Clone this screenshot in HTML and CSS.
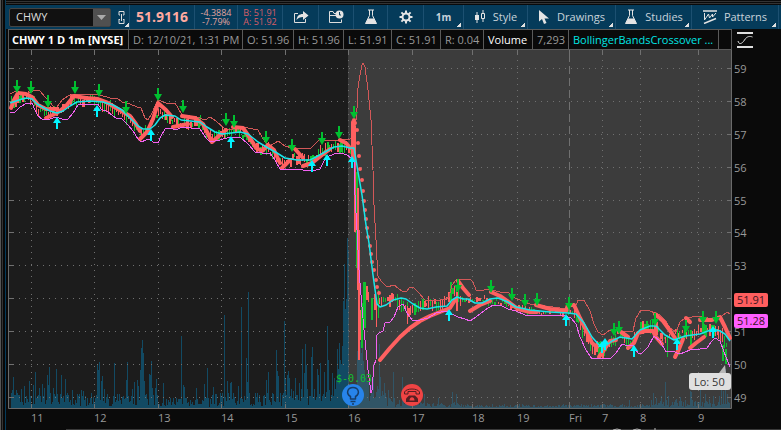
FILE: index.html
```html
<!DOCTYPE html>
<html lang="en">
<head>
<meta charset="utf-8">
<title>CHWY 1 D 1m</title>
<link rel="stylesheet" href="styles.css">
</head>
<body>
<div class="window">
  <div class="gutter"></div>
  <main class="panel">
    <div class="toolbar">
      <div class="tool symbol">
        <div class="picker">
          <select class="picker-select" aria-label="Symbol"><option>CHWY</option></select>
          <svg class="picker-arrow" viewBox="0 0 17 17"><path d="M4 6h9l-4.500 5z" fill="#aaa"/></svg>
        </div>
        <button class="link-button menu" aria-label="Link">
          <svg width="9" height="15" viewBox="0 0 9 15" fill="none" stroke="#ddd"><path d="M2 5V1.500h5V5M2 9v4.500h5V9M4.500 4v7M2 5h1M6 5h1M2 9.500h1M6 9.500h1"/></svg>
        </button>
      </div>
      <div class="tool last">51.9116</div>
      <div class="tool pair change"><span>-4.3884</span><span>-7.79%</span></div>
      <div class="tool pair quote"><span>B: 51.91</span><span>A: 51.92</span></div>
      <button class="tool" aria-label="Share"><svg width="16" height="14" viewBox="0 0 16 14"><path d="M5 3.500H1.500v9h11V9" fill="none" stroke="#ddd"/><path d="M3.500 10C4 6 6 4 10 4V1l5.500 4.500L10 10V7C7 7 5 8 3.500 10z" fill="#e4e4e4"/></svg></button>
      <button class="tool" aria-label="Calendar"><svg width="16" height="14" viewBox="0 0 16 14"><path d="M8 3.500H6L5 1.500H1.500v11h12V9.500M1.500 5.500H8" fill="none" stroke="#ddd"/><circle cx="11.500" cy="4.500" r="4" fill="#e4e4e4"/><path d="M11.500 2v3h1.500" fill="none" stroke="#053b5a"/></svg></button>
      <button class="tool" aria-label="Flask"><svg width="14" height="16" viewBox="0 0 14 16"><path d="M4 1h6M5.500 1v5.500L1.500 14.500h11L8.500 6.500V1" fill="none" stroke="#e4e4e4"/><path d="M4 9.500h6l2.500 5h-11z" fill="#e4e4e4"/></svg></button>
      <button class="tool" aria-label="Settings"><svg width="14" height="14" viewBox="-7 -7 14 14" fill="none" stroke="#e4e4e4"><circle r="3.500" stroke-width="2"/><path stroke-width="2" d="M0-6.500v3M0 3.500v3M-6.500 0h3M3.500 0h3M-4.600-4.600l2 2M2.600 2.600l2 2M-4.600 4.600l2-2M2.600-2.600l2-2"/></svg></button>
      <button class="tool menu period">1m</button>
      <button class="tool menu"><svg width="12" height="14" viewBox="0 0 12 14"><path d="M3 2v11M9 0v12" stroke="#e4e4e4"/><path d="M1 5h4v5H1z" fill="#e4e4e4"/><path d="M7.500 3.500h3v5h-3z" fill="#053b5a" stroke="#e4e4e4"/></svg>Style</button>
      <button class="tool menu"><svg width="12" height="14" viewBox="0 0 12 14"><path d="M1 0v11.500l3-2.500 2 5 2.500-1-2-4.500H11z" fill="#e4e4e4"/></svg>Drawings</button>
      <button class="tool menu"><svg width="14" height="16" viewBox="0 0 14 16"><path d="M4 1h6M5.500 1v5.500L1.500 14.500h11L8.500 6.500V1" fill="none" stroke="#e4e4e4"/><path d="M4 9.500h6l2.500 5h-11z" fill="#e4e4e4"/></svg>Studies</button>
      <button class="tool menu"><svg width="14" height="14" viewBox="0 0 14 14" fill="none" stroke="#e4e4e4"><path d="M0 1h14M1 13.500l12-5" stroke-width="1.500"/><path d="M1.500 3v7l4-6 1 4 3-4v3L13 3"/></svg>Patterns</button>
    </div>
    <div class="info">
      <span class="cell title">CHWY 1 D 1m [NYSE]</span>
      <span class="cell">D: 12/10/21, 1:31 PM</span>
      <span class="cell">O: 51.96</span>
      <span class="cell">H: 51.96</span>
      <span class="cell">L: 51.91</span>
      <span class="cell">C: 51.91</span>
      <span class="cell">R: 0.04</span>
      <span class="cell bright">Volume</span>
      <span class="cell">7,293</span>
      <span class="cell study">BollingerBandsCrossover ...</span>
      <span class="cell"></span>
      <button class="scale" aria-label="Axis scale"><svg width="16" height="16" viewBox="0 0 16 16" fill="none" stroke="#e0e0e0"><path d="M0 1h16M0 15h16" stroke-width="2"/><path d="M1 9c1 4 4 3 6.500-1S13 4 15.500 5"/></svg></button>
    </div>
    <svg class="chart" id="chart" viewBox="8 50 773 380" role="img" aria-label="Price chart">
      <path d="M8 50h340v359H8z" fill="#1c1c1c"/>
      <path d="M348 50h383v359H348z" fill="#3c3c3c"/>
      <g id="volume"></g>
      <g id="grid" stroke="#707070"></g>
      <path class="frame" d="M8.500 50V408.500H731.500V50"/>
      <g id="candles"></g>
      <path class="upper" d="M10 94L16 91 22 93 28 93 33 91 36 90 40 91 45 97 50 102 55 109 57 107 62 100 68 96 74 94 100 95 110 98 117 98 122 102 130 104 137 107 141 108 145 118 148 120 152 113 158 100 166 103 175 103 178 108 182 115 197 117 205 120 210 117 216 121 224 128 230 130 238 127 248 128 258 130 265 142 270 146 278 141 285 146 292 148 310 149 314 145 320 139 326 141 340 140 350 139 353 137 356 120 357 108 358 88 360 75 362 65 363 63 365 67 368 90 371 120 373 170 374 205 376 240 377 260 378 276 381 281 387 287 394 285 402 291 406 292 410 287 414 288 418 292 425 300 434 301 446 299 449 297 452 285 456 280 470 279 473 282 476 290 480 291 488 289 500 292 508 292 512 297 520 300 530 304 545 306 560 308 568 309 572 305 575 308 578 300 584 300 590 311 594 324 598 332 603 335 610 330 620 331 633 331 636 318 641 310 650 311 660 315 665 320 670 328 676 332 680 322 685 318 692 317 700 316 708 318 716 318 722 316 727 312 730 314"/>
      <g class="thick">
        <path d="M11 108L14 100 18 93 26 94 32 97 38 105 46 109 56 109"/>
        <path d="M46 118L57 113 66 106 74 96 86 98 98 99 106 102 118 109 130 116 136 124 140 131"/>
        <path d="M140 139L147 132 153 119 158 103 166 110 172 117M173 127L188 124M182 116L195 118 203 124 207 132 212 142 220 135 226 130M233 127L243 128 250 138 256 148 262 151 268 145 274 150 280 163M282 168L290 160M295 149L303 158M303 166L312 163 322 155 330 149M340 140L346 143 350 148M353 122L353 158"/>
        <path d="M380 360L390 348 400 337 410 328 420 321 430 316 440 312 450 308 455 300M458 281L463 288 469 295M470 311L480 305 490 301M491 292L500 296 510 303 518 309 530 312 537 312M536 305L550 309 566 311 568 305 574 305 580 318 586 330 592 343 597 347"/>
        <path d="M599 357L604 350 610 341 616 340M621 332L628 337M628 348L634 343 638 333 645 331 653 331 656 337 662 344M655 314L663 321 671 332 675 338M675 357L679 349 683 339M686 318L690 322M690 348L696 343 704 337M700 320L712 320 720 317 725 327 730 338"/>
      </g>
      <path class="dots" d="M354 120h0M355 123h0M357 130h0M358 143h0M359 156h0M360 169h0M362 180h0M363 191h0M364 201h0M365 210h0M366 219h0M367 228h0M368 237h0M370 246h0M371 254h0M372 262h0M374 270h0M376 280h0M377 287h0M379 293h0"/>
      <path class="mid" d="M10 103L16 101 22 99 27 98 32 99 37 104 44 108 50 111 57 113 63 111 70 106 77 102 90 101 103 102 113 105 122 110 130 118 138 126 143 129 150 129 155 125 160 118 165 115 175 116 181 120 200 122 207 127 215 132 222 134 240 132 248 134 258 142 268 148 277 153 285 158 297 160 310 160 316 157 325 152 334 147 342 146 350 148 354 148 356 160 358 172 362 195 366 225 369 243 373 275 377 304 380 307 386 305 393 300 401 298 406 299 413 304 420 308 427 309 436 307 447 306 452 300 457 297 463 299 468 299 475 303 482 303 490 299 498 298 508 302 516 307 530 310 550 312 568 313 576 314 584 323 592 337 599 345 604 347 612 341 620 337 632 339 640 330 650 326 656 326 665 335 674 340 685 336 700 334 713 329 720 331 725 334 730 341"/>
      <path class="lower" d="M10 112L15 112 20 107 27 103 32 103 35 110 38 116 42 119 50 119 56 117 62 119 68 119 73 113 78 105 85 104 98 104 101 109 108 112 116 118 122 119 128 125 133 131 138 139 141 142 146 140 150 139 153 142 158 143 161 136 165 129 170 128 176 130 182 127 200 129 206 138 210 142 220 140 230 137 240 137 248 144 255 152 262 153 270 153 275 160 280 169 290 169 303 170 312 171 320 169 324 161 327 157 334 154 341 153 347 155 351 158 354 161 355 195 357 230 359 270 361 295 364 330 368 370 371 393 372 390 374 365 376 360 377 335 379 333 383 331 385 323 390 322 394 317 398 307 403 304 407 313 412 320 420 320 428 318 436 313 446 311 450 313 458 317 465 319 470 321 476 317 485 310 493 305 500 305 508 309 516 311 525 315 545 315 565 316 571 318 576 324 580 337 586 350 592 359 600 358 610 359 616 353 622 344 628 346 633 345 638 353 642 353 648 347 654 336 660 341 666 352 672 351 680 354 690 350 700 349 707 348 711 342 715 338 720 341 724 352 730 367"/>
      <g id="arrows"></g>
      <g id="labels" class="axis"></g>
      <text class="earn" x="336" y="382">$-0.03</text>
      <g>
        <circle cx="353" cy="395" r="11" fill="#2784ea"/>
        <path d="M350.500 399v-2.500c-5-3-3-9 2.500-9s7.500 6 2.500 9v2.500zM350.500 401.500h5M352 404h2" fill="none" stroke="#173d68" stroke-width="1.500"/>
        <circle cx="412" cy="395" r="11" fill="#f04444"/>
        <path d="M404.500 394v-2c2-4 13-4 15 0v2h-3.500v-2.500h-8v2.500z" fill="none" stroke="#571f22"/>
        <path d="M406 402v-3.500l3-3h6l3 3v3.500z" fill="#571f22"/>
        <path d="M409.500 400.500c0-4.500 5-4.500 5 0z" fill="#f04444"/>
      </g>
      <g>
        <path d="M719 373l6-8 1 8z" fill="#b8b8b8"/>
        <rect x="689" y="373" width="42" height="17" rx="3" fill="#e0e0e0"/>
        <text class="low" x="694" y="386">Lo: 50</text>
        <rect x="734" y="293" width="34" height="14" rx="2" fill="#ff5e5e"/>
        <text class="tag" x="737" y="304">51.91</text>
        <rect x="734" y="314" width="34" height="14" rx="2" fill="#ff5eff"/>
        <text class="tag" x="737" y="325">51.28</text>
      </g>
      <path d="M66 429.500H781" stroke="#3a3a3a"/>
      <path d="M613 430q4-2 8 0M633 430q4-2 8 0M655 428v2" fill="none" stroke="#bbb"/>
    </svg>
  </main>
</div>
<script src="chart.js"></script>
</body>
</html>
```

FILE: styles.css
```css
* { box-sizing: border-box; }
body {
  margin: 0;
  background: #0a0a0a;
  color: #999;
  font: 11px/14px "Open Sans", "Noto Sans", sans-serif;
}
button, select { font: inherit; color: inherit; background: none; border: 0; padding: 0; margin: 0; }
.window { display: flex; align-items: stretch; }
.gutter {
  flex: none;
  width: 6px;
  background: linear-gradient(90deg, #555 1px, #111 1px 2px, #333 2px 3px, #080808 3px 5px, #053b5a 5px);
}
.panel {
  flex: 1;
  min-width: 0;
  padding-top: 5px;
  background: linear-gradient(#0a0a0a 1px, #333 1px 2px, #0a0a0a 2px 3px, #333 3px 4px, #0a0a0a 4px);
}
.toolbar {
  display: grid;
  grid-template-columns: 124fr 65fr 43fr 45fr 36fr 35fr 34fr 36fr 40fr 64fr 88fr 76fr 87fr 2fr;
  height: 24px;
  background: #053b5a;
}
.tool {
  position: relative;
  display: flex;
  align-items: center;
  justify-content: center;
  gap: 7px;
  min-width: 0;
  border-right: 1px solid #1c5071;
  color: #c8d3da;
  white-space: nowrap;
}
.menu { position: relative; }
.menu::after {
  content: "";
  position: absolute;
  right: 2px;
  bottom: 2px;
  width: 4px;
  height: 4px;
  background: linear-gradient(135deg, transparent 50%, #e0e0e0 50%);
}
.symbol { justify-content: flex-start; padding-left: 3px; gap: 3px; }
.picker {
  display: flex;
  flex: 1;
  height: 19px;
  border: 1px solid #444;
  border-radius: 2px;
  background: #111;
}
.picker-select { flex: 1; min-width: 0; appearance: none; padding-left: 6px; color: #ddd; outline: 0; }
.picker-arrow { flex: none; width: 17px; height: 17px; background: #505050; }
.link-button { width: 15px; height: 20px; display: flex; align-items: center; justify-content: center; }
.link-button::after { right: 0; bottom: 0; }
.last { color: #ffaaa0; font-size: 14px; font-weight: 700; }
.tool.pair { flex-direction: column; gap: 0; font-size: 9px; line-height: 9px; }
.change { color: #e0a49f; }
.quote { color: #d75e67; }
.period { font-size: 10px; font-weight: 700; }
.info {
  display: grid;
  grid-template-columns: 121fr 114fr 51fr 50fr 48fr 49fr 43fr 49fr 36fr 150fr 13fr 49fr;
  height: 21px;
  margin-left: 2px;
  background: #0a0a0a;
}
.cell {
  display: flex;
  align-items: center;
  padding-left: 4px;
  min-width: 0;
  border: solid #5a5a5a;
  border-width: 1px 1px 1px 0;
  white-space: nowrap;
  color: #999;
}
.title { color: #fff; font-weight: 700; box-shadow: inset 1px 0 #5a5a5a; }
.bright { color: #fff; }
.study { color: #00e6e6; }
.scale { display: flex; align-items: center; padding-left: 5px; }
.chart { display: block; width: calc(100% - 2px); height: auto; margin-left: 2px; }
.chart path { stroke-linejoin: round; }
.frame { fill: none; stroke: #6a6a6a; }
.upper, .mid, .lower { fill: none; stroke-width: 1; shape-rendering: crispEdges; }
.upper { stroke: #d25858; }
.mid { stroke: #18e6ea; stroke-width: 1.5px; shape-rendering: auto; }
.lower { stroke: #f262f2; }
.thick { fill: none; stroke: #ff6060; stroke-width: 4; stroke-linecap: round; }
.dots { stroke: #ff6060; stroke-width: 4; stroke-linecap: round; }
.up { fill: #10c030; }
.down { fill: #ff6060; }
.sell { fill: #00c030; }
.buy { fill: #00f4ff; }
.axis { fill: #999; font-size: 11px; }
.earn { fill: #10c030; font: 10px "DejaVu Sans Mono", monospace; }
.low { fill: #333; }
.tag { fill: #3a1420; }
```

FILE: chart.js
```js
const NS = "http://www.w3.org/2000/svg";
const layer = id => document.getElementById(id);

function draw(parent, name, attrs, text) {
  const el = document.createElementNS(NS, name);
  for (const key in attrs) el.setAttribute(key, attrs[key]);
  if (text) el.textContent = text;
  layer(parent).appendChild(el);
}

let seed = 41;
function random() {
  seed = (seed * 16807) % 2147483647;
  return seed / 2147483647;
}

// Price rows, top to bottom, and session hours along the bottom.
const rows = [68, 101, 134, 167, 200, 232, 265, 298, 331, 364, 397];
const hours = [[31, "11"], [94, "12"], [158, "13"], [221, "14"], [285, "15"], [348, "16"], [412, "17"],
  [472, "18"], [517, "19"], [569, "Fri"], [602, "7"], [640, "8"], [698, "9"]];

rows.forEach((y, i) => {
  draw("grid", "path", { d: `M19 ${y + 0.5}H727`, "stroke-dasharray": "1 5" });
  draw("grid", "path", { d: `M8 ${y + 0.5}h6M727 ${y + 0.5}h5` });
  if (i !== 7) draw("labels", "text", { x: 734, y: y + 5 }, String(59 - i));
});
hours.forEach(([x, name]) => {
  draw("grid", "path", { d: `M${x + 0.5} 54V404`, "stroke-dasharray": name === "Fri" ? "8 4" : "1 5" });
  draw("grid", "path", { d: `M${x + 0.5} 50v4M${x + 0.5} 404v4` });
  draw("labels", "text", { x: x, y: 422 }, name);
});

// Volume: named spikes over a low background level.
const spikes = { 11: 15, 12: 18, 13: 31, 16: 18, 21: 19, 24: 22, 29: 27, 33: 23, 35: 36, 39: 20, 42: 24, 44: 20,
  47: 33, 48: 23, 49: 41, 53: 20, 56: 39, 61: 33, 65: 29, 72: 18, 81: 18, 83: 17, 97: 44, 98: 38, 99: 46, 101: 27,
  102: 32, 104: 19, 114: 45, 126: 28, 127: 46, 132: 19, 134: 26, 137: 28, 138: 22, 140: 38, 141: 60, 142: 68,
  143: 55, 144: 27, 149: 34, 150: 33, 151: 47, 152: 20, 155: 20, 156: 29, 163: 25, 181: 72, 183: 23, 184: 21,
  196: 20, 204: 24, 207: 40, 213: 21, 224: 93, 227: 27, 230: 25, 231: 26, 238: 22, 241: 101, 246: 50, 247: 26,
  248: 116, 266: 28, 268: 36, 276: 58, 277: 37, 278: 32, 284: 87, 285: 30, 287: 33, 288: 37, 289: 30, 295: 30,
  299: 25, 302: 59, 304: 35, 305: 64, 306: 43, 311: 51, 312: 61, 317: 39, 318: 33, 320: 45, 324: 36, 327: 82,
  328: 48, 332: 35, 336: 28, 337: 59, 338: 39, 339: 65, 340: 48, 341: 44, 342: 62, 343: 107, 344: 144, 345: 99,
  346: 109, 347: 170, 348: 158, 357: 57, 358: 70, 359: 60, 360: 66, 361: 55, 362: 60, 363: 47, 364: 38, 365: 30,
  366: 34, 367: 26, 368: 28, 373: 40, 379: 64, 380: 31, 384: 25, 388: 18, 393: 36, 402: 31, 410: 24, 414: 18,
  424: 14, 438: 10, 452: 16, 456: 14, 629: 8, 653: 15, 656: 10, 661: 12, 665: 26, 668: 12, 676: 9, 680: 11,
  690: 17, 691: 16, 700: 24, 705: 14, 713: 12, 719: 12, 721: 18, 723: 17, 725: 39, 727: 14 };

for (let x = 11; x < 730; x++) {
  let base = 16;
  if (x > 157 && x < 212) base = 11;
  if (x > 285) base = 20;
  if (x > 330) base = 32;
  if (x > 349) base = 24;
  if (x > 385) base = 11;
  if (x > 425) base = 6;
  if (x > 460) base = 4;
  if (x > 650) base = 9;
  const level = Math.round(random() * base * 0.85 + base * 0.12);
  const height = spikes[x] || level;
  draw("volume", "rect", { x, y: 408 - height, width: 1, height, fill: x < 348 ? "#124a63" : "#315566" });
}

// One-minute candles: [x, centre] waypoints, with small bars scattered round them.
const trail = [[11, 102], [20, 97], [30, 98], [38, 110], [48, 113], [60, 108], [70, 101], [98, 101], [116, 112],
  [130, 120], [141, 134], [150, 125], [158, 112], [165, 118], [172, 122], [200, 123], [210, 136], [225, 133],
  [240, 132], [256, 148], [268, 149], [280, 163], [294, 158], [310, 161], [325, 149], [340, 146], [352, 150]];
const evening = [[379, 303], [395, 299], [408, 311], [420, 306], [440, 303], [446, 300], [454, 292], [462, 301],
  [480, 299], [500, 302], [525, 311], [560, 312], [574, 313], [582, 331], [592, 347], [605, 349], [618, 334],
  [630, 345], [640, 326], [652, 326], [665, 339], [678, 333], [692, 336], [705, 328], [718, 331], [728, 347]];

function scatter(points, low, high) {
  for (let i = 0; i < points.length - 1; i++) {
    const [x0, y0] = points[i];
    const [x1, y1] = points[i + 1];
    for (let x = x0; x < x1; x += 2) {
      const centre = y0 + (y1 - y0) * (x - x0) / (x1 - x0) + (random() - 0.5) * 6;
      const height = Math.round(low + random() * high);
      draw("candles", "rect", { class: random() > 0.5 ? "up" : "down", x, y: Math.round(centre - height / 2),
        width: random() > 0.7 ? 2 : 1, height });
    }
  }
}
scatter(trail, 3, 8);
scatter(evening.slice(0, 8), 3, 11);
scatter(evening.slice(7, 13), 1, 4);
scatter(evening.slice(12), 2, 12);

const bars = [["down", 354, 120, 232, 2], ["up", 356, 172, 268, 2], ["down", 357, 188, 290, 2],
  ["down", 358, 230, 360, 2], ["up", 352, 134, 152, 1], ["down", 360, 310, 340, 2], ["up", 361, 303, 348, 2],
  ["up", 363, 282, 328, 3], ["down", 366, 286, 300, 2], ["down", 368, 292, 302, 1], ["up", 371, 298, 320, 2],
  ["down", 374, 294, 310, 2], ["down", 376, 300, 327, 1], ["up", 378, 290, 318, 1], ["down", 407, 306, 324, 1],
  ["up", 450, 282, 300, 2], ["down", 456, 292, 311, 2], ["up", 667, 340, 357, 1], ["up", 679, 332, 355, 1],
  ["up", 690, 334, 349, 2], ["up", 722, 345, 361, 2], ["up", 725, 349, 364, 2]];
bars.forEach(([kind, x, top, bottom, width]) =>
  draw("candles", "rect", { class: kind, x, y: top, width, height: bottom - top }));

const sells = [[17, 80], [31, 81], [48, 95], [75, 81], [99, 84], [126, 101], [158, 88], [183, 100], [226, 113],
  [234, 115], [266, 131], [292, 139], [322, 132], [339, 126], [354, 106], [458, 279], [491, 280], [512, 288],
  [525, 294], [537, 293], [569, 297], [614, 323], [619, 321], [655, 313], [686, 320], [703, 311], [716, 311]];
const buys = [[57, 117], [97, 105], [151, 129], [231, 136], [312, 160], [327, 154], [352, 156], [449, 309],
  [566, 314], [602, 341], [605, 338], [634, 345], [677, 338], [713, 326]];
sells.forEach(([x, y]) => draw("arrows", "path", { class: "sell", d: `M${x - 1} ${y}h2v6h3l-4 7l-4-7h3z` }));
buys.forEach(([x, y]) => draw("arrows", "path", { class: "buy", d: `M${x} ${y}l4 6h-3v6h-2v-6h-3z` }));
```
